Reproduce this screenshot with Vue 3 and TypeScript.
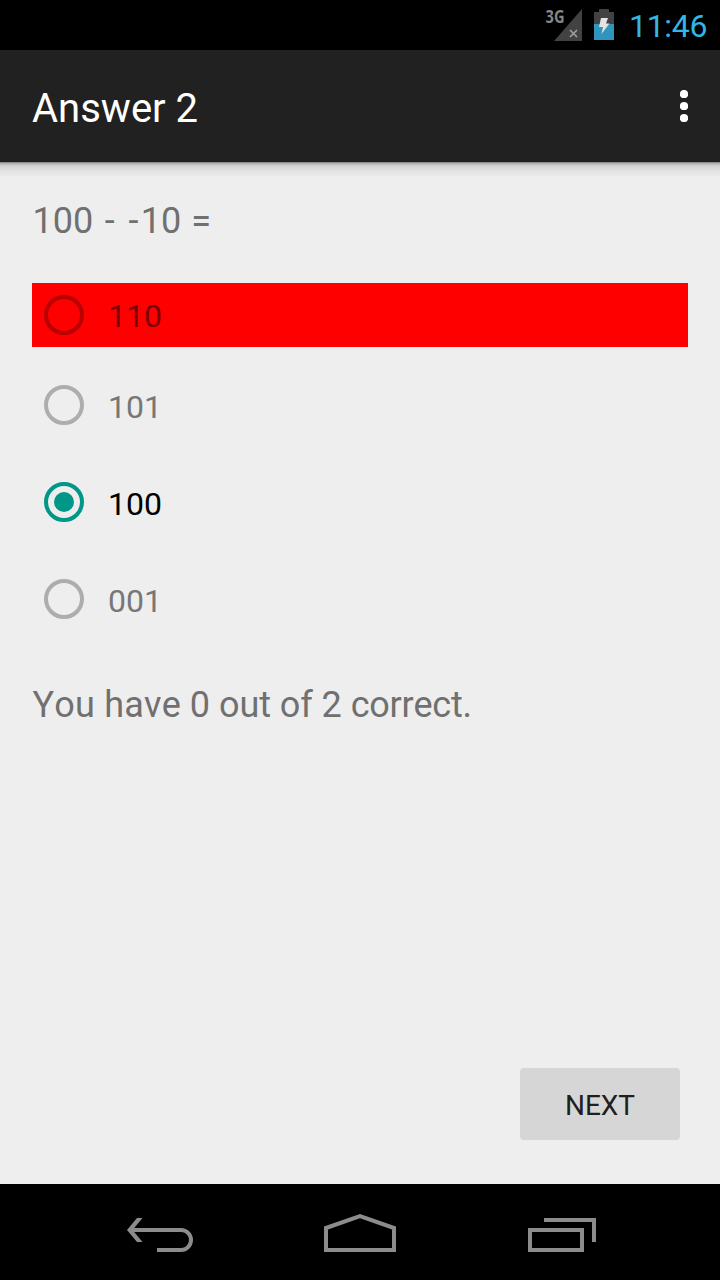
<script setup lang="ts">
interface Option {
  label: string
  state: 'answer' | 'selected' | 'plain'
}

const options: Option[] = [
  { label: '110', state: 'answer' },
  { label: '101', state: 'plain' },
  { label: '100', state: 'selected' },
  { label: '001', state: 'plain' },
]
</script>

<template>
  <div class="screen">
    <header class="status">
      <svg class="signal" width="38" height="36" viewBox="0 0 38 36">
        <path d="M37 3V35H9Z" fill="#424242" />
        <path d="M25 24L32 31M32 24L25 31" stroke="#a0a0a0" stroke-width="1.6" />
        <text x="0.5" y="17" class="network" textLength="19" lengthAdjust="spacingAndGlyphs">3G</text>
      </svg>
      <svg class="battery" width="20" height="32" viewBox="0 0 20 32">
        <path d="M0 3H5V0H15V3H20V15H0Z" fill="#424242" />
        <path d="M0 15H20V31H0Z" fill="#3095bd" />
        <path d="M7 9H14L12 14.500H15.500L7.500 25L9 18H5Z" fill="#e4e4e4" />
      </svg>
      <span class="clock">11:46</span>
    </header>

    <div class="toolbar">
      <h1 class="title">Answer 2</h1>
      <svg class="more" width="8" height="32" viewBox="0 0 8 32">
        <circle cx="4" cy="4" r="4.100" fill="#fff" />
        <circle cx="4" cy="16" r="4.100" fill="#fff" />
        <circle cx="4" cy="28" r="4.100" fill="#fff" />
      </svg>
    </div>

    <main class="content">
      <p class="question">100 <span class="minus">-</span> <span class="minus">-</span>10 =</p>
      <div class="options">
        <div v-for="option in options" :key="option.label" class="option" :class="option.state">
          <svg class="radio" width="40" height="40" viewBox="0 0 40 40">
            <circle cx="20" cy="20" r="18" fill="none" stroke="currentColor" stroke-width="4" />
            <circle v-if="option.state === 'selected'" cx="20" cy="20" r="10" fill="currentColor" />
          </svg>
          <span class="label">{{ option.label }}</span>
        </div>
      </div>
      <p class="score"><span class="loose">You have</span> 0 out of 2 <span class="tight">correct.</span></p>
      <button class="next" type="button">NEXT</button>
    </main>

    <nav class="navbar">
      <svg width="67" height="40" viewBox="0 0 67 40" overflow="visible">
        <path d="M2 17L12 5H17.500L7.500 17L17.500 29H12Z" fill="#8c8c8c" />
        <path d="M5 17H56A10 10 0 0 1 56 37H32" class="line" />
      </svg>
      <svg width="72" height="40" viewBox="0 0 72 40">
        <path d="M2 15L36 3L70 15V37H2Z" class="line" />
      </svg>
      <svg width="68" height="40" viewBox="0 0 68 40">
        <path d="M2 17H54V37H2Z" class="line" />
        <path d="M16 7H66V29" class="line" />
      </svg>
    </nav>
  </div>
</template>

<style>
body {
  margin: 0;
  background: #000;
}
</style>

<style scoped>
.screen {
  width: 720px;
  height: 1280px;
  display: flex;
  flex-direction: column;
  overflow: hidden;
  background: #eee;
  font-family: Roboto, "Noto Sans", sans-serif;
}

.status {
  height: 50px;
  display: flex;
  justify-content: flex-end;
  box-sizing: border-box;
  padding-right: 12px;
  background: #000;
}

.signal {
  margin: 6px 11px 0 0;
}

.network {
  font: 700 17px "Open Sans", "Noto Sans", sans-serif;
  fill: #858585;
}

.battery {
  margin: 9px 15px 0 0;
}

.clock {
  width: 79px;
  font-size: 32px;
  line-height: 52px;
  letter-spacing: -0.3px;
  white-space: nowrap;
  color: #33b5e5;
}

.toolbar {
  height: 112px;
  display: flex;
  align-items: center;
  justify-content: space-between;
  box-sizing: border-box;
  padding: 0 32px;
  background: #212121;
}

.title {
  margin: 6px 0 0;
  font-size: 40px;
  font-weight: 400;
  line-height: 48px;
  color: #fff;
}

.content {
  flex: 1;
  display: flex;
  flex-direction: column;
  padding: 33px 32px 0;
  background: linear-gradient(#707070 0, #a8a8a8 1px, #c8c8c8 3px, #d8d8d8 5px, #e2e2e2 9px, #e8e8e8 13px, #eee 15px);
}

.question,
.score {
  margin: 0;
  font-size: 36px;
  line-height: 52px;
  color: #707070;
  white-space: pre;
}

.question {
  padding-left: 0.5px;
  word-spacing: 1px;
}

.minus {
  padding: 0 2.4px 0 1.5px;
}

.options {
  margin-top: 36px;
}

.option {
  height: 64px;
  display: flex;
  align-items: center;
  box-sizing: border-box;
  padding-left: 12px;
  margin-bottom: 33px;
  color: #adadad;
}

.option.answer {
  margin-bottom: 26px;
  background: #f00;
  color: #b80000;
}

.option.selected {
  color: #009688;
}

.label {
  margin: 3px 0 0 24px;
  font-size: 32px;
  line-height: 40px;
  color: #777;
}

.answer .label {
  margin-top: 1px;
  color: #7d0000;
}

.selected .label {
  color: #000;
}

.score {
  margin-top: 15px;
  padding-left: 0.5px;
  letter-spacing: -0.05px;
  font-kerning: none;
}

.loose {
  letter-spacing: 0.2px;
}

.tight {
  letter-spacing: -0.25px;
}

.next {
  align-self: flex-end;
  width: 160px;
  height: 72px;
  margin: auto 8px 44px 0;
  padding: 3px 0 0;
  border: 0;
  border-radius: 4px;
  background: #d6d6d6;
  font-family: inherit;
  font-size: 28px;
  color: #1e1e1e;
}

.navbar {
  height: 96px;
  display: flex;
  align-items: flex-start;
  justify-content: space-between;
  box-sizing: border-box;
  padding: 29px 124px 0 125px;
  background: #000;
}

.line {
  fill: none;
  stroke: #8c8c8c;
  stroke-width: 4;
}
</style>
